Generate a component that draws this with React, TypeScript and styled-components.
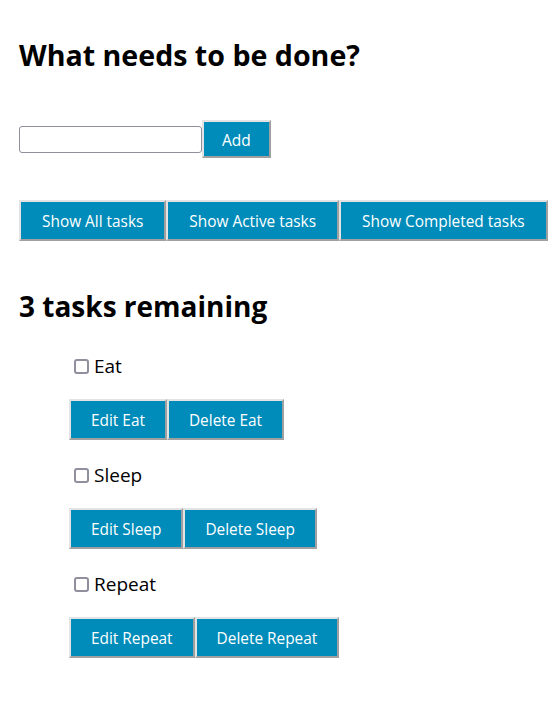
import styled, { createGlobalStyle } from "styled-components";
import { useState } from "react";

type Task = { id: number; name: string; done: boolean };

const GlobalStyle = createGlobalStyle`
  body {
    margin: 0;
    background: #fff;
    color: #000;
    font-family: "Open Sans", "Noto Sans", sans-serif;
  }
`;

const App = () => {
  const [tasks, setTasks] = useState<Task[]>([
    { id: 1, name: "Eat", done: false },
    { id: 2, name: "Sleep", done: false },
    { id: 3, name: "Repeat", done: false },
  ]);
  const [text, setText] = useState("");

  // 체크 상태 토글
  const toggle = (id: number) =>
    setTasks(tasks.map((t) => (t.id === id ? { ...t, done: !t.done } : t)));

  const remaining = tasks.filter((t) => !t.done).length;

  return (
    <Page>
      <GlobalStyle />
      <Title>What needs to be done?</Title>
      <Form onSubmit={(e) => e.preventDefault()}>
        <Input value={text} onChange={(e) => setText(e.target.value)} />
        <Btn type="submit" $small>
          Add
        </Btn>
      </Form>
      <FilterRow>
        <FilterBtn>Show All tasks</FilterBtn>
        <FilterBtn>Show Active tasks</FilterBtn>
        <FilterBtn>Show Completed tasks</FilterBtn>
      </FilterRow>
      <Remaining>{remaining} tasks remaining</Remaining>
      <List>
        {tasks.map((t) => (
          <Item key={t.id}>
            <Label>
              <Check
                type="checkbox"
                checked={t.done}
                onChange={() => toggle(t.id)}
              />
              {t.name}
            </Label>
            <BtnRow>
              <Btn>Edit {t.name}</Btn>
              <Btn>Delete {t.name}</Btn>
            </BtnRow>
          </Item>
        ))}
      </List>
    </Page>
  );
};

const Page = styled.div`
  padding: 0 10px 0 19px;
`;

const Title = styled.h2`
  margin: 37px 0 0;
  font-size: 28.6px;
  line-height: 36px;
  font-weight: 700;
`;

const Form = styled.form`
  display: flex;
  align-items: center;
  margin-top: 47px;
`;

const Input = styled.input`
  box-sizing: border-box;
  width: 183px;
  height: 27px;
  border: 1px solid #8f8f9d;
  border-radius: 3px;
  padding: 2px 4px;
  font-size: 14px;
`;

const FilterRow = styled.div`
  display: flex;
  margin-top: 42px;
`;

const Remaining = styled.h2`
  margin: 47px 0 0;
  font-size: 28px;
  line-height: 36px;
  font-weight: 700;
`;

const List = styled.ul`
  list-style: none;
  margin: 0;
  padding: 0 0 0 50px;
`;

const Item = styled.li`
  margin-top: 29px;
  &:not(:first-child) {
    margin-top: 22px;
  }
`;

const Label = styled.label`
  display: flex;
  align-items: center;
  height: 26px;
  font-size: 19px;
`;

const Check = styled.input`
  appearance: none;
  box-sizing: border-box;
  width: 15px;
  height: 15px;
  margin: 0 5px 0 5px;
  border: 2px solid #8f8f9d;
  border-radius: 3px;
  background: #fff;
`;

const BtnRow = styled.div`
  display: flex;
  margin-top: 20px;
`;

const Btn = styled.button<{ $small?: boolean }>`
  box-sizing: border-box;
  flex-shrink: 0;
  white-space: nowrap;
  height: ${(p) => (p.$small ? "38px" : "41px")};
  padding: 2px ${(p) => (p.$small ? "18px" : "20px")} 0;
  margin: 0;
  background-color: #008cba;
  color: #fff;
  font-family: "Open Sans", "Noto Sans", sans-serif;
  font-size: ${(p) => (p.$small ? "15.5px" : "15.4px")};
  border-style: solid;
  border-width: 2px;
  border-color: #e3e3e3 #a0a0a0 #a0a0a0 #e3e3e3;
  cursor: pointer;
`;

const FilterBtn = styled(Btn)`
  padding: 2px 21px 0;
`;

export default App;
